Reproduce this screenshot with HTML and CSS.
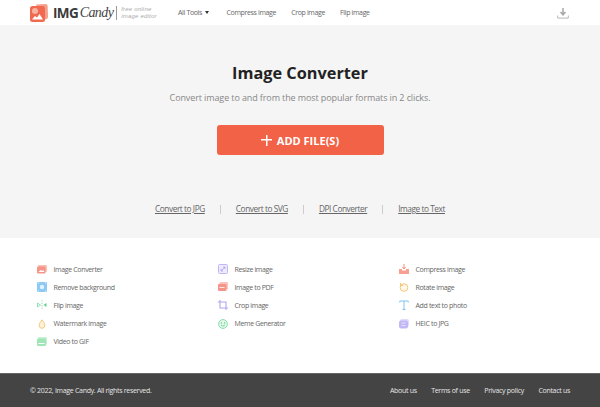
FILE: index.html
```html
<!doctype html>
<html lang="en">
<head>
<meta charset="utf-8" />
<title>Image Converter - IMG Candy</title>
<meta name="viewport" content="width=device-width, initial-scale=1" />
<link rel="stylesheet" href="styles.css">
</head>
<body>
  <!-- header -->
  <header class="topbar">
    <a class="logo" href="#">
      <svg class="logo-mark" width="18" height="18" viewBox="0 0 18 18">
        <path d="M6 .5L15.500 0q2 0 2.200 2l.3 11q0 2-2 2.200L12 15.500z" fill="#f4a08c"/>
        <rect x="0" y="2" width="15" height="16" rx="2.500" fill="#ef6a50"/>
        <circle cx="5" cy="7" r="3" fill="#f7b4a2"/>
        <path d="M2 15.500l3-3.500 2 1.500 2.500-3.500 3.500 5.500z" fill="#fff"/>
      </svg>
      <span class="logo-img">IMG</span>
      <span class="logo-candy">Candy</span>
      <span class="logo-tag">free online<br>image editor</span>
    </a>
    <nav class="nav">
      <a href="#">All Tools <i class="caret"></i></a>
      <a href="#">Compress image</a>
      <a href="#">Crop image</a>
      <a href="#">Flip image</a>
    </nav>
    <svg class="dl" width="12" height="12" viewBox="0 0 12 12">
      <path d="M6 1v6M3.500 5L6 7.800 8.500 5" fill="none" stroke="#a8a8a8" stroke-width="1.500"/>
      <path d="M.7 8.500v2.600h10.600V8.500" fill="none" stroke="#b8b8b8" stroke-width="1"/>
    </svg>
  </header>

  <!-- hero -->
  <section class="hero">
    <h1>Image Converter</h1>
    <p>Convert image to and from the most popular formats in 2 clicks.</p>
    <a class="add-btn" href="#"><span class="plus"></span>ADD FILE(S)</a>
    <div class="sublinks">
      <a href="#">Convert to JPG</a><i></i>
      <a href="#">Convert to SVG</a><i></i>
      <a href="#">DPI Converter</a><i></i>
      <a href="#">Image to Text</a>
    </div>
  </section>

  <!-- tools -->
  <section class="tools">
    <ul>
      <li><svg viewBox="0 0 10 10"><rect x="1" y="1" width="9" height="7" rx="1" fill="#f9c0b5"/><rect y="2.500" width="8.500" height="7" rx="1" fill="#f5958a"/><path d="M1.500 8l2-2 1.500 1 1-1 1.500 2z" fill="#fff"/></svg>Image Converter</li>
      <li><svg viewBox="0 0 10 10"><rect width="10" height="10" rx="1" fill="#8cc9f4"/><circle cx="5" cy="5" r="2.200" fill="#e3f2fd"/><path d="M1 1h1M8 1h1M1 9h1M8 9h1" stroke="#e3f2fd"/></svg>Remove background</li>
      <li><svg viewBox="0 0 10 10"><path d="M5 0v10" stroke="#a5e4be" stroke-dasharray="1.500 1"/><path d="M3.500 5L.5 3v4z" fill="none" stroke="#7ad9a0" stroke-width=".8"/><path d="M6.500 5l3-2v4z" fill="#63d08f"/></svg>Flip image</li>
      <li><svg viewBox="0 0 10 10"><path d="M5 .8C3.600 3 2.200 4.500 2.200 6.500a2.800 2.800 0 005.600 0C7.800 4.500 6.400 3 5 .8z" fill="#fdf3dc" stroke="#f4c97c"/></svg>Watermark image</li>
      <li><svg viewBox="0 0 10 10"><rect x="1" y="0" width="9" height="7.500" rx="1" fill="#c9f0d5"/><rect y="1.500" width="9" height="7.500" rx="1" fill="#a0e5b6"/><path d="M1.500 6.500h6" stroke="#fff"/></svg>Video to GIF</li>
    </ul>
    <ul>
      <li><svg viewBox="0 0 10 10"><rect x=".5" y=".5" width="9" height="9" rx="1" fill="#eeebff" stroke="#c0b7f5"/><path d="M3 7l4-4M5 3h2v2M3 5v2h2" fill="none" stroke="#a99df0" stroke-width=".8"/></svg>Resize image</li>
      <li><svg viewBox="0 0 10 10"><rect x="1.500" y="0" width="8.500" height="7.500" rx="1" fill="#fac2b8"/><rect y="2" width="8.500" height="7" rx="1" fill="#f5958a"/><path d="M1.500 5.500h5" stroke="#fff" stroke-width=".8"/></svg>Image to PDF</li>
      <li><svg viewBox="0 0 10 10"><path d="M2 0v8h8M0 2h8v8" fill="none" stroke="#b0a5f0" stroke-width="1.100"/></svg>Crop image</li>
      <li><svg viewBox="0 0 10 10"><circle cx="5" cy="5" r="4.400" fill="#e6f9ec" stroke="#85dfa8"/><circle cx="3.400" cy="4" r=".7" fill="#53c981"/><circle cx="6.600" cy="4" r=".7" fill="#53c981"/><path d="M3 6.200q2 1.800 4 0" fill="none" stroke="#53c981" stroke-width=".7"/></svg>Meme Generator</li>
    </ul>
    <ul>
      <li><svg viewBox="0 0 10 10"><path d="M0 5h3v1.500h4V5h3v5H0z" fill="#f7a092"/><path d="M5 0v4M3.500 3L5 5l1.500-2" fill="none" stroke="#f58f7e"/></svg>Compress image</li>
      <li><svg viewBox="0 0 10 10"><circle cx="5" cy="5.500" r="3.800" fill="#fff9ec" stroke="#f6c674"/><path d="M1.500 1v2.500H4" fill="none" stroke="#f6c674"/></svg>Rotate image</li>
      <li><svg viewBox="0 0 10 10"><path d="M.8 2.500V1h8.400v1.500M5 1v8.500M3.500 9.500h3" fill="none" stroke="#7fc5f2" stroke-width="1"/></svg>Add text to photo</li>
      <li><svg viewBox="0 0 10 10"><rect x="1" y="0" width="9" height="8" rx="2" fill="#e0dafb"/><rect y="1.500" width="9" height="8" rx="2" fill="#c2b7f6"/><path d="M2.500 4h4M2.500 6.500h4" stroke="#eeeafd" stroke-width=".8"/></svg>HEIC to JPG</li>
    </ul>
  </section>

  <!-- footer -->
  <footer class="foot">
    <span>© 2022, Image Candy. All rights reserved.</span>
    <nav>
      <a href="#">About us</a>
      <a href="#">Terms of use</a>
      <a href="#">Privacy policy</a>
      <a href="#">Contact us</a>
    </nav>
  </footer>
</body>
</html>
```

FILE: styles.css
```css
*{margin:0;padding:0;box-sizing:border-box}
html,body{height:100%}
body{
  display:flex;flex-direction:column;
  font-family:"Open Sans",sans-serif;color:#444;background:#fff;
}
a{color:inherit;text-decoration:none}

/* === header === */
.topbar{
  height:25px;flex:none;
  display:flex;align-items:center;
  padding:0 30px;background:#fff;
}
.logo{display:flex;align-items:center;width:148px;flex:none}
.logo-mark{flex:none;margin-right:5px}
.logo-img{font-size:13.500px;font-weight:700;color:#3a3a3a;letter-spacing:-.6px}
.logo-candy{
  font-family:"Liberation Serif",serif;font-style:italic;
  font-size:14px;color:#444;margin-left:1.500px;letter-spacing:-.6px;
  padding-right:3px;border-right:1px solid #999;line-height:14px;
}
.logo-tag{
  font-family:"Liberation Sans",sans-serif;
  font-size:6px;line-height:7px;font-style:italic;color:#aaa;margin-left:4px;
  white-space:nowrap;letter-spacing:.2px;
}
.nav{display:flex;gap:15px;font-size:7px;letter-spacing:-.35px;color:#666}
.nav a{white-space:nowrap}
.nav a:first-child{margin-right:2px}
.caret{
  display:inline-block;margin-left:2px;vertical-align:1px;
  border:2px solid transparent;border-top:3px solid #333;border-bottom:0;
  border-left-width:2.500px;border-right-width:2.500px;
}
.dl{margin-left:auto;margin-right:1px}

/* === hero === */
.hero{
  height:213px;flex:none;background:#f5f5f5;
  display:flex;flex-direction:column;align-items:center;
  padding-top:36px;
}
.hero h1{font-size:16.300px;line-height:24px;font-weight:700;color:#222}
.hero p{font-size:9px;letter-spacing:-.11px;line-height:14px;color:#888;margin-top:6px}
.add-btn{
  width:167px;height:30px;margin-top:20px;
  display:flex;align-items:center;justify-content:center;gap:5px;
  background:#f26246;border-radius:3px;
  color:#fff;font-size:11px;font-weight:700;
}
.plus{
  width:11px;height:11px;
  background:
    linear-gradient(#fff,#fff) center/100% 1.500px no-repeat,
    linear-gradient(#fff,#fff) center/1.500px 100% no-repeat;
}
.sublinks{
  display:flex;align-items:center;gap:15px;margin-top:48px;
  font-size:8.300px;letter-spacing:-.44px;line-height:12px;color:#666;
}
.sublinks a{text-decoration:underline}
.sublinks i{width:1px;height:9px;background:#ccc}

/* === tools === */
.tools{
  flex:1;background:#fff;
  display:grid;grid-template-columns:181px 181px 1fr;
  padding:22px 0 0 36.500px;
}
.tools li{
  list-style:none;display:flex;align-items:center;gap:7px;
  height:18.200px;font-size:7px;letter-spacing:-.35px;color:#666;
}
.tools svg{width:10px;height:10px;flex:none}

/* === footer === */
.foot{
  height:34px;flex:none;
  display:flex;align-items:center;justify-content:space-between;
  padding:0 30px;background:#444;border-top:1px solid #666;
  font-size:7px;letter-spacing:-.3px;color:#e4e4e4;
}
.foot nav{display:flex;gap:14.500px}
```
